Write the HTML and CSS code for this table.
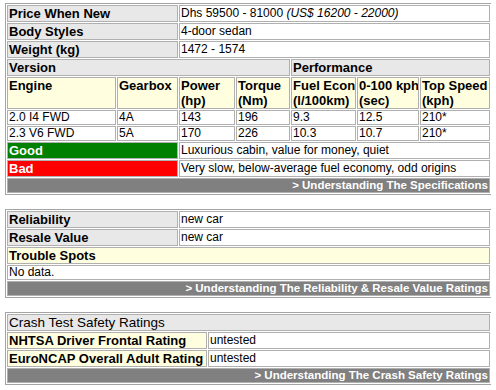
FILE: index.html
```html
<!DOCTYPE html>
<html>
<head>
<meta charset="utf-8">
<link rel="stylesheet" href="styles.css">
</head>
<body>
<table class="grid spec">
  <colgroup>
    <col class="w-engine"><col class="w-gear"><col class="w-power"><col class="w-torque"><col class="w-fuel"><col class="w-accel"><col class="w-speed">
  </colgroup>
  <tr class="row"><th colspan="2" class="lbl">Price When New</th><td colspan="5" class="val">Dhs 59500 - 81000 <i>(US$ 16200 - 22000)</i></td></tr>
  <tr class="row"><th colspan="2" class="lbl">Body Styles</th><td colspan="5" class="val">4-door sedan</td></tr>
  <tr class="row"><th colspan="2" class="lbl">Weight (kg)</th><td colspan="5" class="val">1472 - 1574</td></tr>
  <tr class="row"><th colspan="4" class="lbl">Version</th><th colspan="3" class="lbl">Performance</th></tr>
  <tr class="hdr">
    <th>Engine</th><th>Gearbox</th><th>Power<br>(hp)</th><th>Torque<br>(Nm)</th><th>Fuel Econ<br>(l/100km)</th><th>0-100 kph<br>(sec)</th><th>Top Speed<br>(kph)</th>
  </tr>
  <tr class="data"><td>2.0 I4 FWD</td><td>4A</td><td>143</td><td>196</td><td>9.3</td><td>12.5</td><td>210*</td></tr>
  <tr class="data"><td>2.3 V6 FWD</td><td>5A</td><td>170</td><td>226</td><td>10.3</td><td>10.7</td><td>210*</td></tr>
  <tr class="row"><th colspan="2" class="good">Good</th><td colspan="5" class="val">Luxurious cabin, value for money, quiet</td></tr>
  <tr class="row"><th colspan="2" class="bad">Bad</th><td colspan="5" class="val">Very slow, below-average fuel economy, odd origins</td></tr>
  <tr><td colspan="7" class="foot">&gt; Understanding The Specifications</td></tr>
</table>

<table class="grid rel">
  <colgroup><col class="w-label"><col></colgroup>
  <tr class="row"><th class="lbl">Reliability</th><td class="val">new car</td></tr>
  <tr class="row"><th class="lbl">Resale Value</th><td class="val">new car</td></tr>
  <tr class="row"><th colspan="2" class="cream">Trouble Spots</th></tr>
  <tr class="data"><td colspan="2">No data.</td></tr>
  <tr><td colspan="2" class="foot">&gt; Understanding The Reliability &amp; Resale Value Ratings</td></tr>
</table>

<table class="grid crash">
  <colgroup><col class="w-crash"><col></colgroup>
  <tr class="row"><th colspan="2" class="lbl title">Crash Test Safety Ratings</th></tr>
  <tr class="row"><th class="cream">NHTSA Driver Frontal Rating</th><td class="val">untested</td></tr>
  <tr class="row"><th class="cream">EuroNCAP Overall Adult Rating</th><td class="val">untested</td></tr>
  <tr><td colspan="2" class="foot">&gt; Understanding The Crash Safety Ratings</td></tr>
</table>
</body>
</html>
```
FILE: styles.css
```css
* { box-sizing: border-box; }

body {
  margin: 3px 5px;
  background: #ffffff;
  font-family: "Liberation Sans", Arial, sans-serif;
  color: #000;
}

.grid {
  width: 487px;
  table-layout: fixed;
  border-collapse: separate;
  border-spacing: 1px;
  border: 1px solid #a4a4a4;
  margin: 0 0 14px 0;
}

.grid th,
.grid td {
  border: 1px solid #b0b0b0;
  padding: 0 1px;
  text-align: left;
  white-space: nowrap;
  overflow: hidden;
}

.grid th {
  font-weight: bold;
  font-size: 13px;
}

.grid td {
  font-size: 12px;
}

.row th,
.row td {
  height: 17px;
  line-height: 15px;
  vertical-align: middle;
}

.lbl { background: #e8e8e8; }
.cream { background: #ffffe0; }
.val { background: #ffffff; }

.title {
  font-weight: normal !important;
  font-size: 13.5px !important;
}

.good { background: #008000; color: #ffffff; }
.bad { background: #ff0000; color: #ffffff; }

.hdr th {
  background: #ffffe0;
  line-height: 15px;
  vertical-align: top;
  height: 32px;
}

.data td {
  height: 15px;
  line-height: 13px;
  vertical-align: middle;
}

.foot {
  background: #808080;
  color: #ffffff;
  font-weight: bold;
  font-size: 11.5px !important;
  text-align: right !important;
  height: 15px;
  line-height: 13px;
}

.w-engine { width: 109px; }
.w-gear { width: 61px; }
.w-power { width: 56px; }
.w-torque { width: 54px; }
.w-fuel { width: 65px; }
.w-accel { width: 62px; }
.w-speed { width: 70px; }

.w-label { width: 171px; }
.w-crash { width: 200px; }
```
